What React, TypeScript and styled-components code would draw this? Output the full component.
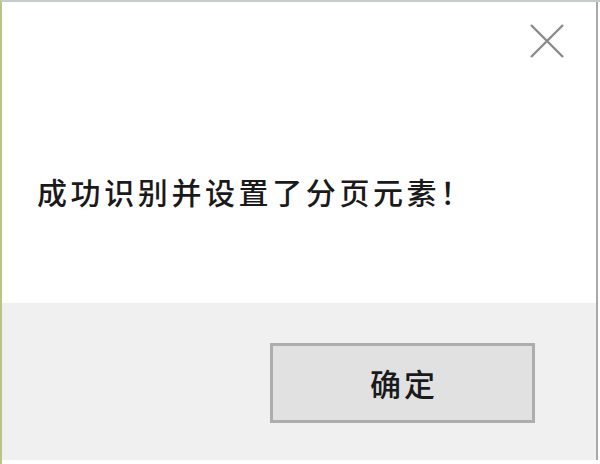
import React from "react"
import styled, { createGlobalStyle } from "styled-components"

const GlobalStyle = createGlobalStyle`
  html, body {
    margin: 0;
    padding: 0;
    background: #ffffff;
  }
  * {
    box-sizing: border-box;
  }
`

const DialogWindow = styled.div`
  width: 600px;
  height: 464px;
  display: flex;
  flex-direction: column;
  background: #ffffff;
  border-top: 2px solid #c6cbcb;
  border-left: 2px solid #b9c48a;
  padding-right: 2px;
  padding-bottom: 4px;
  font-family: "Noto Sans CJK SC", "Noto Sans", sans-serif;
`

const DialogInner = styled.div`
  flex: 1;
  display: flex;
  flex-direction: column;
  border-right: 2px solid #a9a9a9;
`

const DialogBody = styled.div`
  height: 301px;
  display: flex;
  flex-direction: column;
  padding: 16px 26px 0 35px;
`

const TitleRow = styled.div`
  display: flex;
  justify-content: flex-end;
`

const CloseButton = styled.button`
  width: 46px;
  height: 46px;
  display: flex;
  align-items: center;
  justify-content: center;
  padding: 0;
  border: none;
  background: transparent;
  cursor: pointer;
`

const Message = styled.p`
  margin: 107px 0 0;
  font-size: 30px;
  font-weight: 500;
  line-height: 40px;
  letter-spacing: 3.6px;
  color: #1a1a1a;
  white-space: nowrap;
`

const DialogFooter = styled.div`
  flex: 1;
  display: flex;
  justify-content: flex-end;
  align-items: flex-start;
  background: #f0f0f0;
  padding: 40px 61px 0 0;
`

const ActionButton = styled.button`
  width: 265px;
  height: 80px;
  display: flex;
  align-items: center;
  justify-content: center;
  background: #e1e1e1;
  border: 3px solid #adadad;
  font-family: "Noto Sans CJK SC", "Noto Sans", sans-serif;
  font-size: 31px;
  font-weight: 500;
  letter-spacing: 3px;
  padding: 0 0 2px 3px;
  color: #1a1a1a;
  cursor: pointer;
`

const CloseIcon = () => (
  <svg width="34" height="34" viewBox="0 0 34 34">
    <path
      d="M1 1 L33 33 M33 1 L1 33"
      stroke="#8a8a8a"
      strokeWidth="2.4"
      fill="none"
    />
  </svg>
)

const App = () => {
  return (
    <>
      <GlobalStyle />
      <DialogWindow>
        <DialogInner>
          <DialogBody>
            <TitleRow>
              <CloseButton aria-label="关闭">
                <CloseIcon />
              </CloseButton>
            </TitleRow>
            <Message>成功识别并设置了分页元素！</Message>
          </DialogBody>
          <DialogFooter>
            <ActionButton>确定</ActionButton>
          </DialogFooter>
        </DialogInner>
      </DialogWindow>
    </>
  )
}

export default App
